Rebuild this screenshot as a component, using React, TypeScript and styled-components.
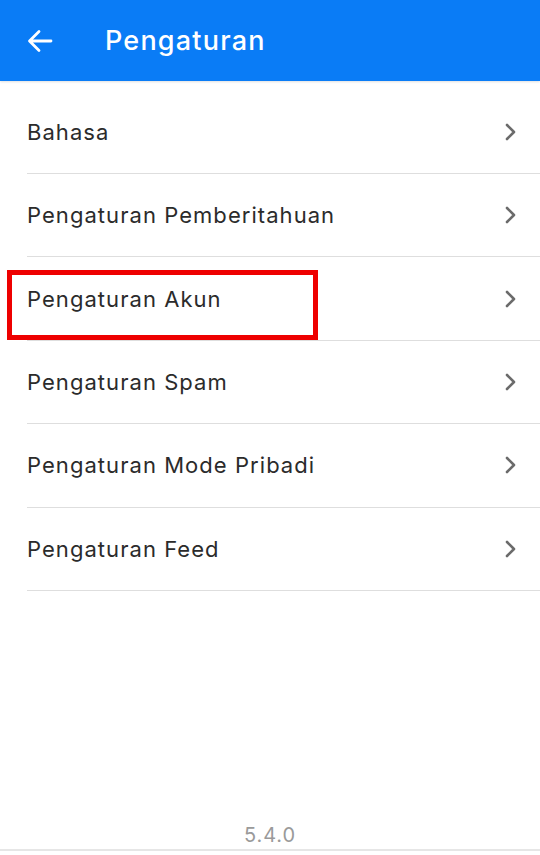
import React from "react";
import styled, { createGlobalStyle } from "styled-components";

const GlobalStyle = createGlobalStyle`
  html, body {
    margin: 0;
    padding: 0;
    background: #ffffff;
  }
  body {
    font-family: "Inter", "Open Sans", sans-serif;
  }
`;

const Screen = styled.div`
  width: 540px;
  height: 855px;
  display: flex;
  flex-direction: column;
  background: #ffffff;
  overflow: hidden;
`;

const Header = styled.header`
  height: 81px;
  flex-shrink: 0;
  display: flex;
  align-items: center;
  background: #0a7cf6;
  box-shadow: 0 1px 2px rgba(0, 0, 0, 0.12);
`;

const BackButton = styled.button`
  width: 80px;
  height: 81px;
  padding: 0 0 0 26px;
  display: flex;
  align-items: center;
  border: none;
  background: transparent;
  color: #ffffff;
`;

const Title = styled.h1`
  margin: 0 0 0 25px;
  font-size: 27px;
  font-weight: 500;
  color: #ffffff;
  letter-spacing: 1.2px;
`;

const List = styled.ul`
  list-style: none;
  margin: 0;
  padding: 9.6px 0 0 27px;
`;

const Row = styled.li`
  position: relative;
  box-sizing: border-box;
  height: 83.4px;
  display: flex;
  align-items: center;
  justify-content: space-between;
  padding-right: 22px;
  border-bottom: 1.4px solid #dedede;
`;

const Label = styled.span`
  font-size: 22px;
  font-weight: 400;
  color: #2b2b2b;
  letter-spacing: 1.05px;
`;

const Highlight = styled.div`
  position: absolute;
  left: -20px;
  top: 13px;
  width: 301px;
  height: 60px;
  border: 5px solid #ee0000;
  pointer-events: none;
`;

const Spacer = styled.div`
  flex: 1;
`;

const Version = styled.div`
  height: 30px;
  display: flex;
  align-items: center;
  justify-content: center;
  font-size: 20px;
  color: #9a9a9a;
  letter-spacing: 0.9px;
  border-bottom: 2px solid #e6e6e6;
  margin-bottom: 4px;
  box-sizing: border-box;
`;

const Chevron = () => (
  <svg width="14" height="18" viewBox="0 0 14 18" fill="none">
    <path
      d="M3 2l7 7-7 7"
      stroke="#6b6b6b"
      strokeWidth="2.6"
      strokeLinecap="round"
      strokeLinejoin="round"
    />
  </svg>
);

const BackArrow = () => (
  <svg width="28" height="28" viewBox="0 0 28 28" fill="none">
    <path
      d="M25 14H4M13 4.5L3.5 14l9.5 9.5"
      stroke="#ffffff"
      strokeWidth="2.8"
      strokeLinecap="round"
      strokeLinejoin="round"
    />
  </svg>
);

const items = [
  "Bahasa",
  "Pengaturan Pemberitahuan",
  "Pengaturan Akun",
  "Pengaturan Spam",
  "Pengaturan Mode Pribadi",
  "Pengaturan Feed",
];

export default function App() {
  return (
    <Screen>
      <GlobalStyle />
      <Header>
        <BackButton aria-label="Kembali">
          <BackArrow />
        </BackButton>
        <Title>Pengaturan</Title>
      </Header>
      <List>
        {items.map((item) => (
          <Row key={item}>
            <Label>{item}</Label>
            <Chevron />
            {item === "Pengaturan Akun" && <Highlight />}
          </Row>
        ))}
      </List>
      <Spacer />
      <Version>5.4.0</Version>
    </Screen>
  );
}
